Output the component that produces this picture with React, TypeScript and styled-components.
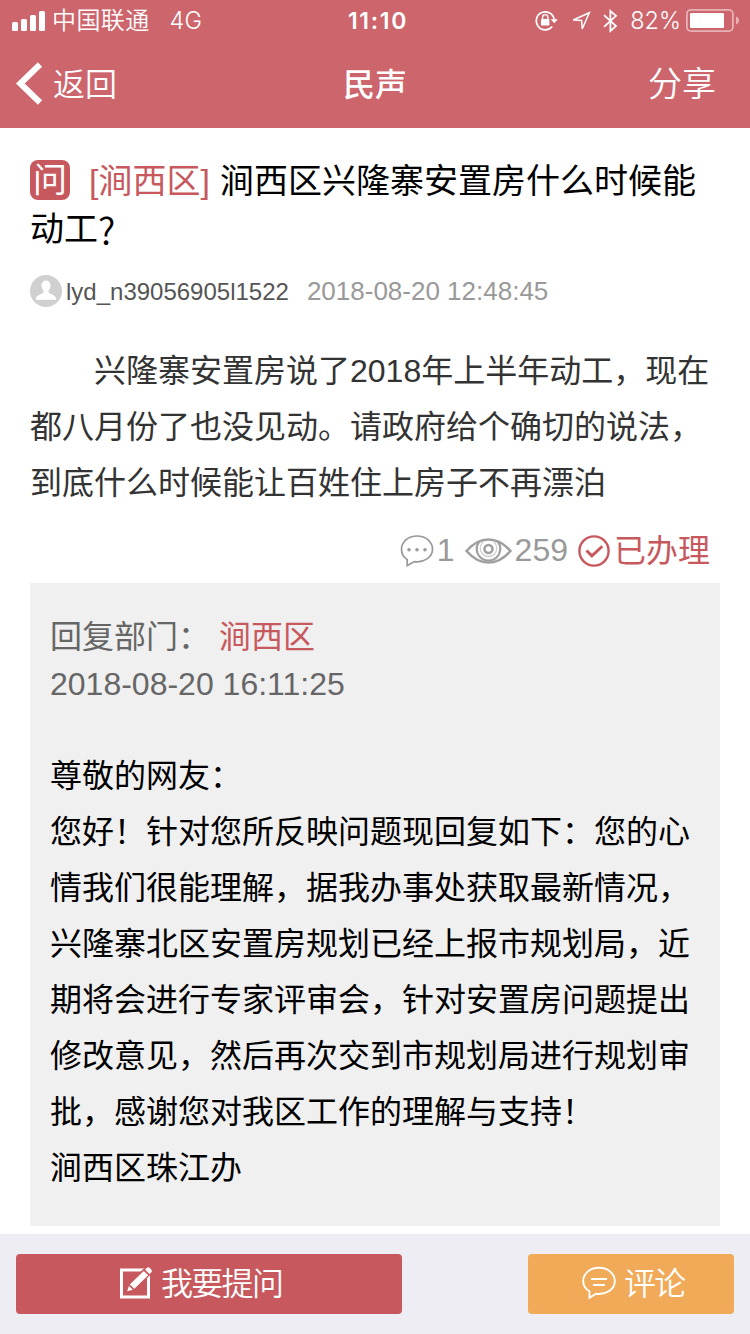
import React from "react";
import styled, { createGlobalStyle } from "styled-components";

const Global = createGlobalStyle`
  * { box-sizing: border-box; }
  body {
    margin: 0;
    background: #fff;
    font-family: "Liberation Sans", "Noto Sans CJK SC", sans-serif;
    color: #000;
  }
`;

const Page = styled.div`
  width: 750px;
  height: 1334px;
  display: flex;
  flex-direction: column;
  overflow: hidden;
  background: #fff;
`;

const Header = styled.header`
  flex: none;
  height: 128px;
  background: #cd656d;
  color: #fff;
`;

const StatusBar = styled.div`
  height: 40px;
  display: grid;
  grid-template-columns: 1fr auto 1fr;
  align-items: center;
  padding: 0 11px 0 12px;
  font-family: Inter, "Noto Sans CJK SC", sans-serif;
  font-size: 24px;
  line-height: 40px;
`;

const StatusSide = styled.div<{ $end?: boolean }>`
  display: flex;
  align-items: center;
  height: 40px;
  justify-content: ${(p) => (p.$end ? "flex-end" : "flex-start")};
`;

const Carrier = styled.span`
  margin-left: 7px;
  padding-top: 1px;
  font-weight: 350;
  letter-spacing: 0.4px;
`;

const Network = styled.span`
  margin-left: 20px;
  padding-top: 1px;
  font-size: 23.5px;
  font-weight: 350;
`;

const Clock = styled.span`
  padding: 1px 0 0 5px;
  font-size: 23px;
  font-weight: 600;
  letter-spacing: 1.7px;
`;

const Percent = styled.span`
  margin: 0 5px 0 12px;
  padding-top: 1px;
  font-size: 23.5px;
  font-weight: 350;
`;

const NavBar = styled.nav`
  height: 88px;
  display: grid;
  grid-template-columns: 1fr auto 1fr;
  align-items: center;
  padding: 0 34px 0 15px;
  font-size: 32px;
  line-height: 82px;
`;

const NavButton = styled.div<{ $end?: boolean }>`
  display: flex;
  align-items: center;
  gap: 10px;
  height: 88px;
  font-size: ${(p) => (p.$end ? 34 : 32)}px;
  font-family: "Noto Sans CJK SC", sans-serif;
  font-weight: 350;
  justify-content: ${(p) => (p.$end ? "flex-end" : "flex-start")};
`;

const NavLabel = styled.span`
  height: 88px;
  line-height: 84px;
`;

const NavTitle = styled.h1`
  height: 88px;
  margin: 0 0 0 19px;
  font-family: "Noto Sans CJK SC", sans-serif;
  font-size: 32px;
  line-height: 84px;
  font-weight: 500;
`;

const Content = styled.main`
  flex: 1;
  padding: 29px 30px 0;
`;

const Question = styled.h2`
  margin: 0;
  font-size: 34px;
  line-height: 48px;
  font-weight: 400;
`;

const QuestionLine = styled.div`
  display: flex;
  align-items: center;
  height: 48px;
  white-space: nowrap;
`;

const QuestionMark = styled.span`
  margin-top: -1px;
  font-family: "Noto Sans CJK SC", sans-serif;
  font-size: 37px;
  font-weight: 350;
`;

const AskBadge = styled.span`
  width: 40px;
  height: 40px;
  margin: -2px 19px 0 0;
  border-radius: 8px;
  background: #c7595e;
  color: #fff;
  font-size: 34px;
  line-height: 41px;
  text-align: center;
`;

const District = styled.span`
  margin-right: 10px;
  color: #c7595e;
`;

const Author = styled.div`
  display: flex;
  align-items: center;
  height: 34px;
  margin-top: 21px;
  white-space: nowrap;
`;

const UserName = styled.span`
  margin-left: 4px;
  padding-top: 1px;
  font-size: 24px;
  color: #555;
`;

const PostedAt = styled.time`
  margin-left: 18px;
  padding-top: 1px;
  font-size: 26px;
  color: #999;
`;

const Body = styled.p`
  margin: 0;
  padding-top: 35px;
  font-size: 32px;
  line-height: 56px;
  color: #333;
`;

const Line = styled.span<{ $indent?: boolean }>`
  display: block;
  height: 56px;
  white-space: nowrap;
  padding-left: ${(p) => (p.$indent ? 64 : 0)}px;
`;

const Stats = styled.div`
  display: flex;
  align-items: center;
  justify-content: flex-end;
  height: 48px;
  margin: 16px 10px 0 0;
  font-size: 32px;
  line-height: 48px;
  color: #999;
`;

const Count = styled.span<{ $before: number; $after: number }>`
  margin: -2px ${(p) => p.$after}px 0 ${(p) => p.$before}px;
`;

const State = styled.span`
  margin: -1px 0 0 4px;
  color: #c7595e;
`;

const Reply = styled.section`
  height: 643px;
  margin-top: 8px;
  padding: 30px 20px 0;
  background: #f0f0f0;
  font-size: 32px;
`;

const ReplyMeta = styled.div`
  height: 48px;
  line-height: 48px;
  color: #666;
  white-space: nowrap;
`;

const Department = styled.span`
  margin-left: 9px;
  color: #c7595e;
`;

const ReplyDate = styled(ReplyMeta)`
  line-height: 46px;
`;

const ReplyText = styled.div`
  margin-top: 39px;
  line-height: 56px;
  color: #000;
`;

const Footer = styled.footer`
  flex: none;
  height: 100px;
  display: flex;
  justify-content: space-between;
  padding: 20px 16px;
  background: #eeedf3;
`;

const Action = styled.button<{ $width: number; $color: string; $before: number; $gap: number }>`
  width: ${(p) => p.$width}px;
  height: 60px;
  display: flex;
  gap: ${(p) => p.$gap}px;
  padding: 0 0 0 ${(p) => p.$before}px;
  border: 0;
  border-radius: 4px;
  background: ${(p) => p.$color};
  color: #fff;
  font: 350 32px/55px "Noto Sans CJK SC", sans-serif;
  letter-spacing: -1.7px;
  white-space: nowrap;

  svg {
    flex: none;
    margin-top: 12px;
  }
`;

const SignalIcon = () => (
  <svg width="33" height="20" viewBox="0 0 33 20" fill="#fff">
    <rect x="0" y="11" width="6" height="9" rx="1.5" />
    <rect x="9" y="8" width="6" height="12" rx="1.5" />
    <rect x="18" y="4" width="6" height="16" rx="1.5" />
    <rect x="27" y="0" width="6" height="20" rx="1.5" />
  </svg>
);

const LockIcon = () => (
  <svg width="23" height="22" viewBox="0 0 23 22" fill="none" stroke="#fff">
    <path d="M19.2 9.5A9 9 0 1 0 17.3 16.5" strokeWidth="1.7" />
    <path d="M15.8 9.3h7l-3.500 4z" fill="#fff" stroke="none" />
    <rect x="6" y="9" width="8.4" height="6.5" rx="0.8" fill="#fff" stroke="none" />
    <path d="M7.6 9.5V7.2a2.6 2.6 0 0 1 5.2 0v2.3" strokeWidth="1.4" />
  </svg>
);

const IconSlot = styled.span<{ $before: number }>`
  display: flex;
  margin-left: ${(p) => p.$before}px;
`;

const LocationIcon = () => (
  <svg width="20" height="20" viewBox="0 0 20 20" fill="none" stroke="#fff" strokeWidth="1.5">
    <path d="M18.3 1.7L2.2 9l8.4.5.6 8.5z" />
  </svg>
);

const BluetoothIcon = () => (
  <svg width="15" height="24" viewBox="0 0 15 24" fill="none" stroke="#fff" strokeWidth="1.8">
    <path d="M1 6.2l12 10.8-5.6 5V2l5.6 4.8L1 17.8" />
  </svg>
);

const BatteryIcon = () => (
  <svg width="53" height="23" viewBox="0 0 53 23">
    <rect x="0.9" y="0.9" width="46" height="21.2" rx="4" fill="none" stroke="#e6b2b6" strokeWidth="1.8" />
    <rect x="4" y="4" width="34" height="15" rx="1.2" fill="#fff" />
    <path d="M50 7.5q3 1.2 3 4t-3 4z" fill="#e6b2b6" />
  </svg>
);

const BackIcon = () => (
  <svg width="28" height="44" viewBox="0 0 28 44" fill="none" stroke="#fff" strokeWidth="6">
    <path d="M25 2.500L5.300 21.500 25 40.500" />
  </svg>
);

const AvatarIcon = () => (
  <svg width="32" height="32" viewBox="0 0 32 32">
    <circle cx="16" cy="16" r="16" fill="#d0d0d0" />
    <path
      fill="#fff"
      d="M16 5.500c2.900 0 4.600 2 4.600 5 0 2.400-1.300 3.600-2 5v2c.5 1.700 7.600 1.600 7.600 7.200H5.800c0-5.600 7.100-5.500 7.600-7.200v-2c-.7-1.400-2-2.600-2-5 0-3 1.700-5 4.600-5z"
    />
  </svg>
);

const CommentIcon = () => (
  <svg width="34" height="34" viewBox="0 0 34 34" fill="none" stroke="#999" strokeWidth="1.7">
    <path d="M7.200 25.600V31.500L14.500 27.600C24 29 32.500 23 32.500 15.500 32.500 8 26 2 17 2S1.500 8 1.500 15.500C1.500 19.600 3.600 23.200 7.200 25.600Z" />
    <g fill="#999" stroke="none">
      <circle cx="9" cy="15.700" r="1.800" />
      <circle cx="17" cy="15.700" r="1.800" />
      <circle cx="25" cy="15.700" r="1.800" />
    </g>
  </svg>
);

const EyeIcon = () => (
  <svg width="47" height="28" viewBox="0 0 47 28" fill="none" stroke="#a0a0a0">
    <path d="M1.500 14C9 5.500 15.500 2.500 23.500 2.500S38 5.500 45.500 14C38 22.500 31.500 25.500 23.500 25.500S9 22.500 1.500 14Z" strokeWidth="2.600" />
    <path d="M14.200 4.500a11.800 11.800 0 1 0 18.600 0" strokeWidth="2.200" />
    <path d="M18 5a8.300 8.300 0 1 0 11 0" strokeWidth="1.300" opacity=".5" />
    <circle cx="23.500" cy="12" r="4" strokeWidth="2.600" />
  </svg>
);

const DoneIcon = () => (
  <svg width="32" height="32" viewBox="0 0 32 32" fill="none" stroke="#c7595e">
    <circle cx="16" cy="16" r="14.600" strokeWidth="2.400" />
    <path d="M8.500 15.500l5.400 5.400L24.300 11.300" strokeWidth="2.900" />
  </svg>
);

const EditIcon = () => (
  <svg width="34" height="34" viewBox="0 0 34 34">
    <path d="M2.500 4h27v27h-27z" fill="none" stroke="#fff" strokeWidth="3" />
    <path d="M6.500 26.700l2.300-8.900L27.500 0 34 6.300 15.500 24.500z" fill="#c7595e" />
    <path d="M8.200 25.300l1.700-5.300 4 3.700z" fill="#fff" />
    <path d="M10.800 18.400L24.700 4.900l4.500 4.400-13.800 13.500z" fill="#fff" />
    <path d="M26 3.600L27.800 1.900q1.500-1.300 3 .1l1.400 1.400q1.300 1.500 0 3L30.500 8z" fill="#fff" />
  </svg>
);

const ReviewIcon = () => (
  <svg width="34" height="34" viewBox="0 0 34 34" fill="none" stroke="#fff" strokeWidth="1.900">
    <path d="M7.500 25.300V31.700L14 27.800C24 29.200 32.800 23.300 32.800 15.200 32.800 7.500 26 1.800 17 1.800S1.200 7.500 1.200 15.200C1.200 19.500 3.600 23 7.500 25.300Z" />
    <path d="M9 13h16M11 19h12" />
  </svg>
);

const questionBody = [
  "兴隆寨安置房说了2018年上半年动工，现在",
  "都八月份了也没见动。请政府给个确切的说法，",
  "到底什么时候能让百姓住上房子不再漂泊",
];

const replyBody = [
  "尊敬的网友：",
  "您好！针对您所反映问题现回复如下：您的心",
  "情我们很能理解，据我办事处获取最新情况，",
  "兴隆寨北区安置房规划已经上报市规划局，近",
  "期将会进行专家评审会，针对安置房问题提出",
  "修改意见，然后再次交到市规划局进行规划审",
  "批，感谢您对我区工作的理解与支持！",
  "涧西区珠江办",
];

export default function App() {
  return (
    <Page lang="zh-CN">
      <Global />
      <Header>
        <StatusBar>
          <StatusSide>
            <SignalIcon />
            <Carrier>中国联通</Carrier>
            <Network>4G</Network>
          </StatusSide>
          <Clock>11:10</Clock>
          <StatusSide $end>
            <LockIcon />
            <IconSlot $before={13}>
              <LocationIcon />
            </IconSlot>
            <IconSlot $before={12}>
              <BluetoothIcon />
            </IconSlot>
            <Percent>82%</Percent>
            <BatteryIcon />
          </StatusSide>
        </StatusBar>
        <NavBar>
          <NavButton>
            <BackIcon />
            <NavLabel>返回</NavLabel>
          </NavButton>
          <NavTitle>民声</NavTitle>
          <NavButton $end>
            <NavLabel>分享</NavLabel>
          </NavButton>
        </NavBar>
      </Header>
      <Content>
        <Question>
          <QuestionLine>
            <AskBadge>问</AskBadge>
            <District>[涧西区]</District>
            涧西区兴隆寨安置房什么时候能
          </QuestionLine>
          <QuestionLine>
            动工<QuestionMark>?</QuestionMark>
          </QuestionLine>
        </Question>
        <Author>
          <AvatarIcon />
          <UserName>lyd_n39056905l1522</UserName>
          <PostedAt>2018-08-20 12:48:45</PostedAt>
        </Author>
        <Body>
          {questionBody.map((line, i) => (
            <Line key={line} $indent={i === 0}>
              {line}
            </Line>
          ))}
        </Body>
        <Stats>
          <CommentIcon />
          <Count $before={3} $after={10}>1</Count>
          <EyeIcon />
          <Count $before={3} $after={10}>259</Count>
          <DoneIcon />
          <State>已办理</State>
        </Stats>
        <Reply>
          <ReplyMeta>
            回复部门：<Department>涧西区</Department>
          </ReplyMeta>
          <ReplyDate>2018-08-20 16:11:25</ReplyDate>
          <ReplyText>
            {replyBody.map((line) => (
              <Line key={line}>{line}</Line>
            ))}
          </ReplyText>
        </Reply>
      </Content>
      <Footer>
        <Action $width={386} $color="#c7595e" $before={103} $gap={8}>
          <EditIcon />
          我要提问
        </Action>
        <Action $width={206} $color="#f0aa58" $before={54} $gap={8}>
          <ReviewIcon />
          评论
        </Action>
      </Footer>
    </Page>
  );
}
